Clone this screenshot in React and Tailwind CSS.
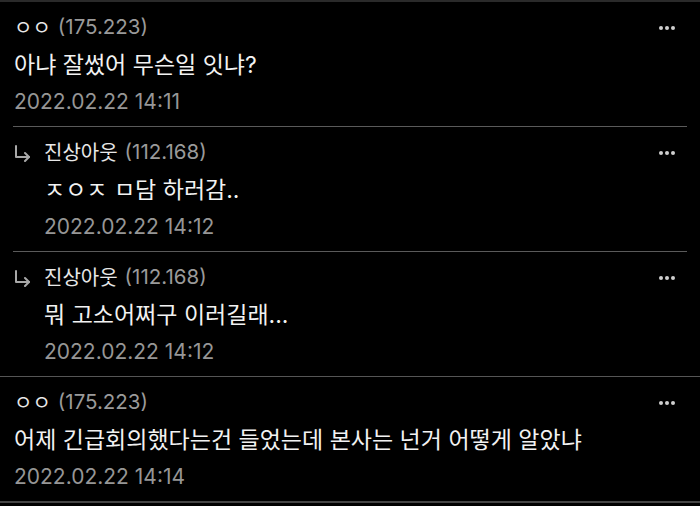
import React from 'react'

const comments = [
  { id: 1, name: 'ㅇㅇ', ip: '175.223', text: '아냐 잘썼어 무슨일 잇냐?', date: '2022.02.22 14:11', reply: false, line: 'inset' },
  { id: 2, name: '진상아웃', ip: '112.168', text: 'ㅈㅇㅈ ㅁ담 하러감..', date: '2022.02.22 14:12', reply: true, line: 'inset' },
  { id: 3, name: '진상아웃', ip: '112.168', text: '뭐 고소어쩌구 이러길래...', date: '2022.02.22 14:12', reply: true, line: 'full' },
  { id: 4, name: 'ㅇㅇ', ip: '175.223', text: '어제 긴급회의했다는건 들었는데 본사는 넌거 어떻게 알았냐', date: '2022.02.22 14:14', reply: false, line: 'bottom' },
]

function ReplyArrow() {
  return (
    <svg className="w-[18px] h-[18px] shrink-0 mr-[12px]" viewBox="0 0 18 18" fill="none" stroke="#a8a8a8" strokeWidth="2" strokeLinecap="round" strokeLinejoin="round" aria-hidden="true">
      <path d="M2 2v11h13" />
      <path d="M11 9l4 4-4 4" />
    </svg>
  )
}

function MoreDots() {
  return (
    <div className="flex items-center gap-[2px] mr-[25px]" aria-label="더보기">
      <span className="w-[4px] h-[4px] rounded-full bg-[#cfcfcf]" />
      <span className="w-[4px] h-[4px] rounded-full bg-[#cfcfcf]" />
      <span className="w-[4px] h-[4px] rounded-full bg-[#cfcfcf]" />
    </div>
  )
}

function Comment({ c }) {
  return (
    <div>
      <div className="pt-[7px] pb-[7px] pl-[14px]">
        <div className="h-[37px] flex items-center justify-between">
          <div className="flex items-center">
            {c.reply && <ReplyArrow />}
            <span className="text-[20px] text-[#e8e8e8]">{c.name}</span>
            <span className="text-[20.5px] text-[#9a9a9a] ml-[7px]">({c.ip})</span>
          </div>
          <MoreDots />
        </div>
        <p className={`h-[38px] flex items-center text-[23px] text-[#f2f2f2] ${c.reply ? 'pl-[30px]' : ''}`}>{c.text}</p>
        <p className={`h-[35px] flex items-center text-[21px] text-[#969696] ${c.reply ? 'pl-[30px]' : ''}`}>{c.date}</p>
      </div>
      {c.line === 'inset' && <div className="mx-[13px] h-px bg-[#5a5a5a]" />}
      {c.line === 'full' && <div className="h-px bg-[#555]" />}
      {c.line === 'bottom' && <div className="h-[2px] bg-[#454545]" />}
    </div>
  )
}

export default function App() {
  return (
    <div className="w-[700px] h-[506px] bg-black overflow-hidden font-['Inter','Noto_Sans_CJK_KR',sans-serif]">
      <div className="h-[2px] bg-[#2a2a2a]" />
      {comments.map(c => <Comment key={c.id} c={c} />)}
    </div>
  )
}
